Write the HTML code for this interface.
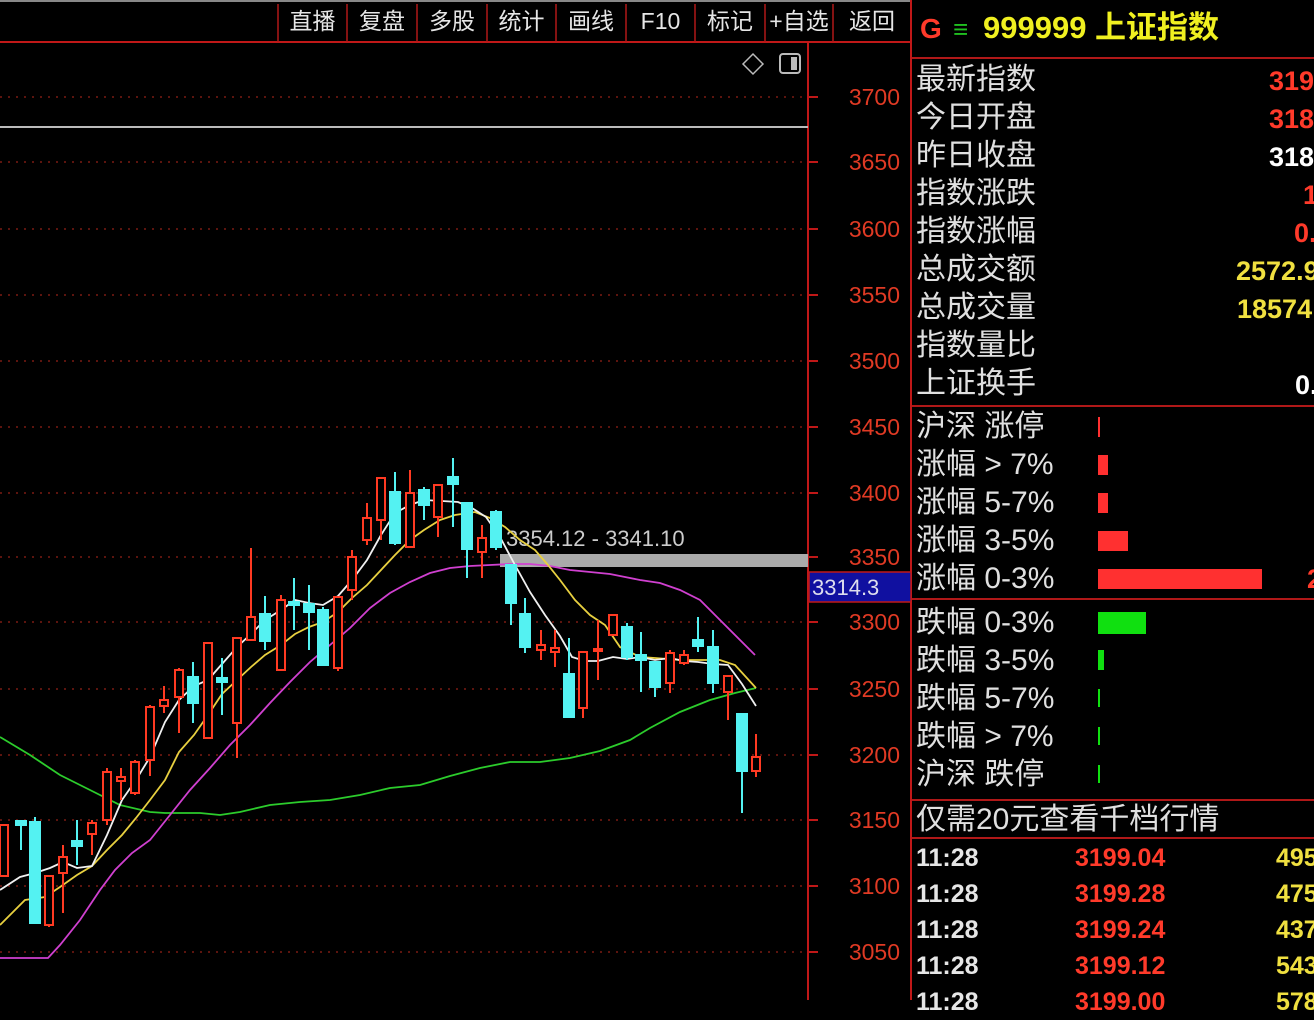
<!DOCTYPE html>
<html><head><meta charset="utf-8"><style>
body{margin:0;background:#000;width:1314px;height:1000px;overflow:hidden;position:relative;font-family:"Liberation Sans","Noto Sans CJK SC",sans-serif}
.t{position:absolute;white-space:nowrap}
.lab{color:#e0e0e0;font-size:30px;left:916px;line-height:38px}
.v{font-weight:bold;font-size:27px;line-height:38px}
.tab{position:absolute;top:4px;color:#e6e6e6;font-size:23px;text-align:center;line-height:34px}
.row{color:#e6e6e6;font-weight:bold;font-size:25px;left:916px;line-height:36px}
</style></head><body>
<svg width="1314" height="1000" style="position:absolute;left:0;top:0">
<line x1="0" y1="1" x2="912" y2="1" stroke="#888" stroke-width="2"/>
<line x1="0" y1="42" x2="912" y2="42" stroke="#c01818" stroke-width="2"/>
<g stroke="#b01818" stroke-width="1.5">
<line x1="278" y1="4" x2="278" y2="42"/><line x1="347" y1="4" x2="347" y2="42"/><line x1="417" y1="4" x2="417" y2="42"/><line x1="487" y1="4" x2="487" y2="42"/><line x1="556" y1="4" x2="556" y2="42"/><line x1="626" y1="4" x2="626" y2="42"/><line x1="695" y1="4" x2="695" y2="42"/><line x1="765" y1="4" x2="765" y2="42"/><line x1="833" y1="4" x2="833" y2="42"/>
</g>
<line x1="808" y1="42" x2="808" y2="1000" stroke="#c01818" stroke-width="2"/>
<line x1="911" y1="0" x2="911" y2="1000" stroke="#c01818" stroke-width="2"/>
<g stroke="#b01818" stroke-width="2">
<line x1="912" y1="58" x2="1314" y2="58"/><line x1="912" y1="406" x2="1314" y2="406"/><line x1="912" y1="599" x2="1314" y2="599"/><line x1="912" y1="800" x2="1314" y2="800"/><line x1="912" y1="838" x2="1314" y2="838"/>
</g>
<g stroke="#7a1a12" stroke-width="1.5" stroke-dasharray="2 6">
<line x1="0" y1="97" x2="805" y2="97"/><line x1="0" y1="162" x2="805" y2="162"/><line x1="0" y1="229" x2="805" y2="229"/><line x1="0" y1="295" x2="805" y2="295"/><line x1="0" y1="361" x2="805" y2="361"/><line x1="0" y1="427" x2="805" y2="427"/><line x1="0" y1="493" x2="805" y2="493"/><line x1="0" y1="557" x2="805" y2="557"/><line x1="0" y1="622" x2="805" y2="622"/><line x1="0" y1="689" x2="805" y2="689"/><line x1="0" y1="755" x2="805" y2="755"/><line x1="0" y1="820" x2="805" y2="820"/><line x1="0" y1="886" x2="805" y2="886"/><line x1="0" y1="952" x2="805" y2="952"/>
</g>
<g stroke="#c01818" stroke-width="2">
<line x1="808" y1="97" x2="818" y2="97"/><line x1="808" y1="162" x2="818" y2="162"/><line x1="808" y1="229" x2="818" y2="229"/><line x1="808" y1="295" x2="818" y2="295"/><line x1="808" y1="361" x2="818" y2="361"/><line x1="808" y1="427" x2="818" y2="427"/><line x1="808" y1="493" x2="818" y2="493"/><line x1="808" y1="557" x2="818" y2="557"/><line x1="808" y1="622" x2="818" y2="622"/><line x1="808" y1="689" x2="818" y2="689"/><line x1="808" y1="755" x2="818" y2="755"/><line x1="808" y1="820" x2="818" y2="820"/><line x1="808" y1="886" x2="818" y2="886"/><line x1="808" y1="952" x2="818" y2="952"/>
</g>
<g fill="#e03a24" font-family="Liberation Sans" font-size="23" text-anchor="end">
<text x="900" y="105">3700</text><text x="900" y="170">3650</text><text x="900" y="237">3600</text><text x="900" y="303">3550</text><text x="900" y="369">3500</text><text x="900" y="435">3450</text><text x="900" y="501">3400</text><text x="900" y="565">3350</text><text x="900" y="630">3300</text><text x="900" y="697">3250</text><text x="900" y="763">3200</text><text x="900" y="828">3150</text><text x="900" y="894">3100</text><text x="900" y="960">3050</text>
</g>
<line x1="0" y1="127" x2="808" y2="127" stroke="#bbb" stroke-width="2"/>
<path d="M753 54 L763 64 L753 74 L743 64 Z" fill="none" stroke="#bbb" stroke-width="1.5"/>
<rect x="780" y="54" width="20" height="19" rx="3" fill="none" stroke="#bbb" stroke-width="2"/><rect x="791" y="57" width="6" height="13" fill="#bbb"/>
<rect x="500" y="554" width="308" height="13" fill="#aaa"/>
<rect x="809" y="572" width="102" height="30" fill="#1010a0" stroke="#c01818" stroke-width="1.5"/>
<text x="812" y="595" fill="#dde" font-family="Liberation Sans" font-size="22">3314.3</text>
<text x="506" y="546" fill="#ccc" font-family="Liberation Sans" font-size="22">3354.12 - 3341.10</text>
<g fill="none" stroke-width="1.8">
<polyline stroke="#2ccc2c" points="0,737 30,755 60,775 90,790 120,805 150,812 165,813 200,813 220,815 240,812 270,805 300,802 330,800 360,795 390,788 420,785 450,776 480,768 510,762 540,762 570,758 600,751 630,740 650,728 680,712 710,700 735,693 756,688"/>
<polyline stroke="#d040d0" points="0,958 48,958 60,945 80,920 100,890 115,870 132,853 150,840 170,815 190,790 210,768 230,745 250,725 270,703 290,682 310,662 330,645 350,628 370,608 390,593 410,582 430,573 450,568 470,566 490,565 510,564 530,564 550,566 570,570 590,572 610,574 625,577 640,580 660,583 680,590 700,600 720,620 740,640 755,655"/>
<polyline stroke="#e8d040" points="0,925 25,900 45,897 60,887 77,875 92,866 107,850 122,835 136,818 150,800 165,780 179,752 194,735 208,715 222,694 237,680 251,667 265,655 281,645 295,634 309,627 323,622 338,612 352,598 367,585 381,570 395,555 410,540 424,530 440,520 455,515 475,512 490,518 505,527 520,540 535,550 548,565 560,580 575,600 590,615 605,625 620,647 640,657 655,658 680,660 700,660 720,660 735,665 756,688"/>
<polyline stroke="#f0f0f0" points="0,890 20,877 35,873 50,868 63,862 77,868 92,866 107,835 122,800 136,780 150,757 165,722 179,700 194,686 208,680 222,664 237,647 251,634 265,620 281,610 295,600 309,603 323,605 338,596 352,580 367,560 381,535 395,513 410,505 424,500 442,501 458,502 472,508 486,517 500,537 515,565 530,592 545,615 560,636 572,657 585,661 598,661 613,657 627,659 640,657 655,660 670,658 684,661 698,662 713,664 728,665 742,684 756,706"/>
</g>
<g stroke="#ff3a22" stroke-width="2" fill="#000">
<line x1="4" y1="825" x2="4" y2="876"/><rect x="0" y="825" width="8" height="51"/>
<line x1="49" y1="876" x2="49" y2="927"/><rect x="45" y="876" width="8" height="49"/>
<line x1="63" y1="845" x2="63" y2="913"/><rect x="59" y="857" width="8" height="16"/>
<line x1="92" y1="820" x2="92" y2="855"/><rect x="88" y="823" width="8" height="11"/>
<line x1="107" y1="768" x2="107" y2="825"/><rect x="103" y="772" width="8" height="48"/>
<line x1="121" y1="768" x2="121" y2="800"/><rect x="117" y="777" width="8" height="4"/>
<line x1="135" y1="760" x2="135" y2="795"/><rect x="131" y="762" width="8" height="31"/>
<line x1="150" y1="705" x2="150" y2="776"/><rect x="146" y="707" width="8" height="53"/>
<line x1="164" y1="686" x2="164" y2="713"/><rect x="160" y="700" width="8" height="6"/>
<line x1="179" y1="668" x2="179" y2="733"/><rect x="175" y="670" width="8" height="27"/>
<line x1="208" y1="643" x2="208" y2="738"/><rect x="204" y="643" width="8" height="95"/>
<line x1="237" y1="638" x2="237" y2="758"/><rect x="233" y="638" width="8" height="85"/>
<line x1="251" y1="548" x2="251" y2="640"/><rect x="247" y="617" width="8" height="23"/>
<line x1="281" y1="595" x2="281" y2="670"/><rect x="277" y="600" width="8" height="70"/>
<line x1="338" y1="597" x2="338" y2="671"/><rect x="334" y="597" width="8" height="71"/>
<line x1="352" y1="550" x2="352" y2="600"/><rect x="348" y="557" width="8" height="33"/>
<line x1="367" y1="503" x2="367" y2="545"/><rect x="363" y="518" width="8" height="22"/>
<line x1="381" y1="478" x2="381" y2="540"/><rect x="377" y="478" width="8" height="42"/>
<line x1="410" y1="470" x2="410" y2="548"/><rect x="406" y="493" width="8" height="54"/>
<line x1="438" y1="485" x2="438" y2="537"/><rect x="434" y="485" width="8" height="32"/>
<line x1="482" y1="525" x2="482" y2="578"/><rect x="478" y="538" width="8" height="14"/>
<line x1="541" y1="630" x2="541" y2="660"/><rect x="537" y="645" width="8" height="5"/>
<line x1="555" y1="630" x2="555" y2="667"/><rect x="551" y="648" width="8" height="4"/>
<line x1="583" y1="652" x2="583" y2="718"/><rect x="579" y="652" width="8" height="56"/>
<line x1="598" y1="620" x2="598" y2="680"/><rect x="594" y="649" width="8" height="2"/>
<line x1="613" y1="615" x2="613" y2="636"/><rect x="609" y="615" width="8" height="20"/>
<line x1="670" y1="650" x2="670" y2="693"/><rect x="666" y="653" width="8" height="30"/>
<line x1="684" y1="650" x2="684" y2="665"/><rect x="680" y="655" width="8" height="8"/>
<line x1="728" y1="675" x2="728" y2="720"/><rect x="724" y="676" width="8" height="16"/>
<line x1="756" y1="734" x2="756" y2="777"/><rect x="752" y="757" width="8" height="14"/>
</g>
<g stroke="#54f2f2" stroke-width="2" fill="#54f2f2">
<line x1="21" y1="822" x2="21" y2="850"/><rect x="16" y="821" width="10" height="4"/>
<line x1="35" y1="817" x2="35" y2="923"/><rect x="30" y="822" width="10" height="101"/>
<line x1="77" y1="820" x2="77" y2="865"/><rect x="72" y="841" width="10" height="5"/>
<line x1="193" y1="662" x2="193" y2="723"/><rect x="188" y="677" width="10" height="26"/>
<line x1="222" y1="658" x2="222" y2="715"/><rect x="217" y="678" width="10" height="4"/>
<line x1="265" y1="596" x2="265" y2="650"/><rect x="260" y="614" width="10" height="27"/>
<line x1="294" y1="578" x2="294" y2="630"/><rect x="289" y="602" width="10" height="3"/>
<line x1="309" y1="585" x2="309" y2="650"/><rect x="304" y="604" width="10" height="8"/>
<line x1="323" y1="607" x2="323" y2="665"/><rect x="318" y="610" width="10" height="55"/>
<line x1="395" y1="472" x2="395" y2="545"/><rect x="390" y="492" width="10" height="51"/>
<line x1="424" y1="487" x2="424" y2="520"/><rect x="419" y="490" width="10" height="15"/>
<line x1="453" y1="458" x2="453" y2="527"/><rect x="448" y="477" width="10" height="7"/>
<line x1="467" y1="503" x2="467" y2="578"/><rect x="462" y="503" width="10" height="46"/>
<line x1="496" y1="510" x2="496" y2="550"/><rect x="491" y="512" width="10" height="35"/>
<line x1="511" y1="565" x2="511" y2="625"/><rect x="506" y="565" width="10" height="38"/>
<line x1="525" y1="598" x2="525" y2="653"/><rect x="520" y="614" width="10" height="33"/>
<line x1="569" y1="638" x2="569" y2="717"/><rect x="564" y="674" width="10" height="43"/>
<line x1="627" y1="623" x2="627" y2="660"/><rect x="622" y="627" width="10" height="30"/>
<line x1="641" y1="632" x2="641" y2="692"/><rect x="636" y="655" width="10" height="5"/>
<line x1="655" y1="662" x2="655" y2="697"/><rect x="650" y="662" width="10" height="25"/>
<line x1="698" y1="617" x2="698" y2="652"/><rect x="693" y="640" width="10" height="6"/>
<line x1="713" y1="630" x2="713" y2="693"/><rect x="708" y="647" width="10" height="36"/>
<line x1="742" y1="714" x2="742" y2="813"/><rect x="737" y="714" width="10" height="57"/>
</g>
<g>
<rect x="1098" y="417" width="2" height="20" fill="#ff3030"/>
<rect x="1098" y="455" width="10" height="20" fill="#ff3030"/>
<rect x="1098" y="493" width="10" height="20" fill="#ff3030"/>
<rect x="1098" y="531" width="30" height="20" fill="#ff3030"/>
<rect x="1098" y="569" width="164" height="20" fill="#ff3030"/>
<rect x="1098" y="612" width="48" height="22" fill="#10e010"/>
<rect x="1098" y="650" width="6" height="20" fill="#10e010"/>
<rect x="1098" y="689" width="2" height="18" fill="#10e010"/>
<rect x="1098" y="727" width="2" height="18" fill="#10e010"/>
<rect x="1098" y="765" width="2" height="18" fill="#10e010"/>
</g>
</svg>
<div class="tab" style="left:278px;width:69px">直播</div>
<div class="tab" style="left:347px;width:70px">复盘</div>
<div class="tab" style="left:417px;width:70px">多股</div>
<div class="tab" style="left:487px;width:69px">统计</div>
<div class="tab" style="left:556px;width:70px">画线</div>
<div class="tab" style="left:626px;width:69px">F10</div>
<div class="tab" style="left:695px;width:70px">标记</div>
<div class="tab" style="left:765px;width:68px">+自选</div>
<div class="tab" style="left:833px;width:78px">返回</div>
<div class="t" style="left:920px;top:10px;font-size:28px;font-weight:bold;color:#ff3a2a;line-height:38px">G</div>
<div class="t" style="left:953px;top:10px;font-size:26px;color:#20c020;line-height:38px">≡</div>
<div class="t" style="left:983px;top:8px;font-size:31px;font-weight:bold;color:#f0f020;line-height:40px">999999 上证指数</div>
<div class="t lab" style="top:61px">最新指数</div>
<div class="t lab" style="top:99px">今日开盘</div>
<div class="t lab" style="top:137px">昨日收盘</div>
<div class="t lab" style="top:175px">指数涨跌</div>
<div class="t lab" style="top:213px">指数涨幅</div>
<div class="t lab" style="top:251px">总成交额</div>
<div class="t lab" style="top:289px">总成交量</div>
<div class="t lab" style="top:327px">指数量比</div>
<div class="t lab" style="top:365px">上证换手</div>
<div class="t v" style="left:1269px;top:62px;color:#ff3a2a">3199</div>
<div class="t v" style="left:1269px;top:100px;color:#ff3a2a">3188</div>
<div class="t v" style="left:1269px;top:138px;color:#fff">3186</div>
<div class="t v" style="left:1303px;top:176px;color:#ff3a2a">13</div>
<div class="t v" style="left:1294px;top:214px;color:#ff3a2a">0.41</div>
<div class="t v" style="left:1236px;top:252px;color:#f0e040">2572.9</div>
<div class="t v" style="left:1237px;top:290px;color:#f0e040">18574</div>
<div class="t v" style="left:1295px;top:366px;color:#fff">0.1</div>
<div class="t lab" style="top:408px">沪深 涨停</div>
<div class="t lab" style="top:446px">涨幅 &gt; 7%</div>
<div class="t lab" style="top:484px">涨幅 5-7%</div>
<div class="t lab" style="top:522px">涨幅 3-5%</div>
<div class="t lab" style="top:560px">涨幅 0-3%</div>
<div class="t v" style="left:1307px;top:560px;color:#ff3a2a">2</div>
<div class="t lab" style="top:604px">跌幅 0-3%</div>
<div class="t lab" style="top:642px">跌幅 3-5%</div>
<div class="t lab" style="top:680px">跌幅 5-7%</div>
<div class="t lab" style="top:718px">跌幅 &gt; 7%</div>
<div class="t lab" style="top:756px">沪深 跌停</div>
<div class="t lab" style="top:801px">仅需20元查看千档行情</div>
<div class="t row" style="top:840px">11:28</div><div class="t row" style="left:1075px;top:840px;color:#ff3a2a">3199.04</div><div class="t row" style="left:1276px;top:840px;color:#f0e040">4951</div>
<div class="t row" style="top:876px">11:28</div><div class="t row" style="left:1075px;top:876px;color:#ff3a2a">3199.28</div><div class="t row" style="left:1276px;top:876px;color:#f0e040">4751</div>
<div class="t row" style="top:912px">11:28</div><div class="t row" style="left:1075px;top:912px;color:#ff3a2a">3199.24</div><div class="t row" style="left:1276px;top:912px;color:#f0e040">4371</div>
<div class="t row" style="top:948px">11:28</div><div class="t row" style="left:1075px;top:948px;color:#ff3a2a">3199.12</div><div class="t row" style="left:1276px;top:948px;color:#f0e040">5431</div>
<div class="t row" style="top:984px">11:28</div><div class="t row" style="left:1075px;top:984px;color:#ff3a2a">3199.00</div><div class="t row" style="left:1276px;top:984px;color:#f0e040">5781</div>
</body></html>
